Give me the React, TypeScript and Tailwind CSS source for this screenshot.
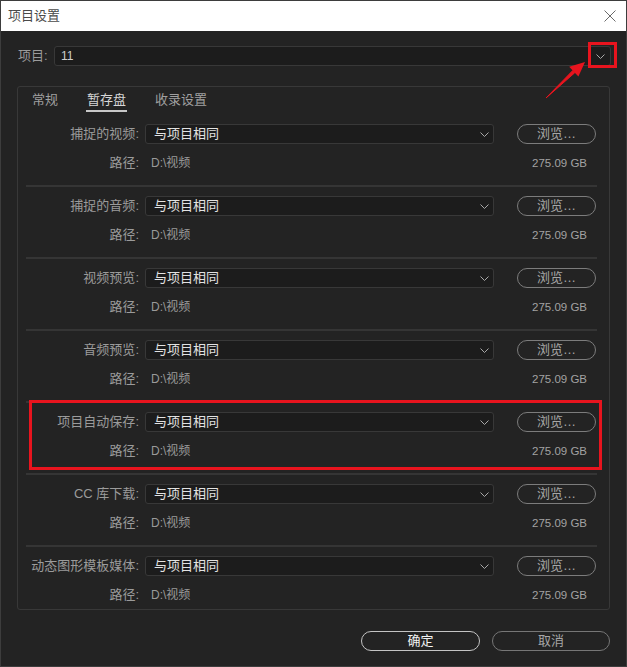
import React from 'react'

const rows = [
  '捕捉的视频',
  '捕捉的音频',
  '视频预览',
  '音频预览',
  '项目自动保存',
  'CC 库下载',
  '动态图形模板媒体',
]

function Chevron() {
  return (
    <svg width="9" height="5" viewBox="0 0 9 5" fill="none">
      <path d="M0.5 0.5 L4.5 4.5 L8.5 0.5" stroke="#a8a8a8" strokeWidth="1" />
    </svg>
  )
}

function Section({ label, first, last }: { label: string; first?: boolean; last?: boolean }) {
  return (
    <div className="flex flex-col">
      {!first && <div className="ml-[8px] mr-[12px] h-[2px] bg-[#353535]" />}
      <div className={`flex flex-col gap-[9px] ${first ? 'pt-[11px]' : 'pt-[9px]'} ${last ? 'pb-[4px]' : 'pb-[12px]'}`}>
        {/* 第一行：位置选择 */}
        <div className="flex h-5 items-center">
          <div className="w-[121px] text-right text-[13px] leading-4 text-[#9b9b9b]">{label}:</div>
          <div className="ml-[6px] flex h-5 w-[349px] items-center justify-between rounded-[3px] border border-[#383838] bg-[#1c1c1c] pl-[8px] pr-[4px]">
            <span className="text-[13px] leading-4 text-[#e2e2e2]">与项目相同</span>
            <Chevron />
          </div>
          <button className="ml-[23px] flex h-5 w-[79px] items-center justify-center rounded-full border border-[#7c7c7c] text-[13px] leading-4 text-[#a6a6a6]">
            浏览…
          </button>
        </div>
        {/* 第二行：路径 */}
        <div className="flex h-5 items-center">
          <div className="w-[121px] text-right text-[13px] leading-4 text-[#9b9b9b]">路径:</div>
          <div className="ml-[12px] w-[366px] text-[12px] leading-4 text-[#9a9a9a]">D:\视频</div>
          <div className="w-[79px] pr-[9px] text-right text-[11.5px] leading-4 text-[#a2a2a2]">275.09 GB</div>
        </div>
      </div>
    </div>
  )
}

export default function App() {
  return (
    <div className="relative flex h-[667px] w-[627px] flex-col overflow-hidden border border-[#3d3d3d] bg-[#232323] font-['Liberation_Sans','Noto_Sans_CJK_SC',sans-serif]">
      {/* 标题栏 */}
      <div className="flex h-[30px] items-center justify-between bg-white pl-[7px] pr-[10px]">
        <span className="text-[13px] leading-4 text-[#4a4a4a]">项目设置</span>
        <svg width="12" height="12" viewBox="0 0 12 12">
          <path d="M0.5 0.5 L11.5 11.5 M11.5 0.5 L0.5 11.5" stroke="#6a6a6a" strokeWidth="1" />
        </svg>
      </div>

      {/* 项目 */}
      <div className="mt-[15px] flex h-5 items-center pl-[17px] pr-[15px]">
        <span className="w-[36px] text-[13px] leading-4 text-[#9b9b9b]">项目:</span>
        <div className="flex h-5 flex-1 items-center justify-between rounded-[3px] border border-[#383838] bg-[#1c1c1c] pl-[6px] pr-[5px]">
          <span className="text-[12px] leading-4 text-[#cfcfcf]">11</span>
          <Chevron />
        </div>
      </div>

      {/* 设置面板 */}
      <div className="ml-[16px] mr-[16px] mt-[20px] flex flex-col rounded-[3px] border border-[#383838]">
        <div className="flex h-[26px] gap-[29px] pl-[14px]">
          <div className="flex h-full items-center text-[13px] leading-4 text-[#a0a0a0]">常规</div>
          <div className="relative flex h-full items-center text-[13px] leading-4 text-[#d6d6d6]">
            暂存盘
            <span className="absolute left-[-1px] right-[-1px] top-[23px] h-[2px] bg-[#c8c8c8]" />
          </div>
          <div className="flex h-full items-center text-[13px] leading-4 text-[#a0a0a0]">收录设置</div>
        </div>
        {rows.map((r, i) => (
          <Section key={r} label={r} first={i === 0} last={i === rows.length - 1} />
        ))}
      </div>

      {/* 底部按钮 */}
      <div className="mr-[16px] mt-[21px] flex justify-end gap-[12px]">
        <button className="flex h-5 w-[119px] items-center justify-center rounded-full border border-[#c4c4c4] text-[13px] leading-4 text-[#f2f2f2]">
          确定
        </button>
        <button className="flex h-5 w-[118px] items-center justify-center rounded-full border border-[#767676] text-[13px] leading-4 text-[#a6a6a6]">
          取消
        </button>
      </div>

      {/* 标注 */}
      <div className="pointer-events-none absolute left-[587px] top-[41px] h-[26px] w-[29px] border-[3px] border-[#e8141e]" />
      <div className="pointer-events-none absolute left-[28px] top-[399px] h-[70px] w-[573px] border-[3px] border-[#e8141e]" />
      <svg className="pointer-events-none absolute left-[539px] top-[54px]" width="50" height="50" viewBox="540 55 50 50">
        <polygon points="546,98 574.8,72.7 572.8,70.5" fill="#e8141e" stroke="#e8141e" strokeWidth="1" strokeLinejoin="round" />
        <polygon points="585,62 578.4,76.5 569.2,66.7" fill="#e8141e" />
      </svg>
    </div>
  )
}
